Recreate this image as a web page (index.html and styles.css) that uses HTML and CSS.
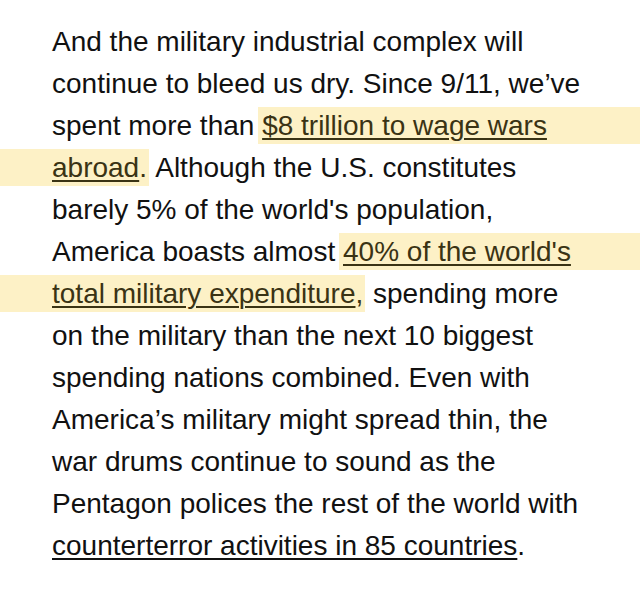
FILE: index.html
```html
<!DOCTYPE html>
<html lang="en">
<head>
<meta charset="utf-8">
<title>Article</title>
<link rel="stylesheet" href="styles.css">
</head>
<body>
<main class="page">
<p class="copy">And the military industrial complex will<br>continue to bleed us dry. Since 9/11, we’ve<br>spent more than <mark class="hl hl-open"><a href="#">$8 trillion to wage wars</a></mark><br><mark class="hl hl-close"><a href="#">abroad</a>.</mark> Although the U.S. constitutes<br>barely 5% of the world's population,<br>America boasts almost <mark class="hl hl-open"><a href="#">40% of the world's</a></mark><br><mark class="hl hl-close"><a href="#">total military expenditure</a>,</mark> spending more<br>on the military than the next 10 biggest<br>spending nations combined. Even with<br>America’s military might spread thin, the<br>war drums continue to sound as the<br>Pentagon polices the rest of the world with<br><a href="#" class="plain">counterterror activities in 85 countries</a>.</p>
</main>
</body>
</html>
```

FILE: styles.css
```css
html, body {
  margin: 0;
  padding: 0;
  background: #ffffff;
  overflow: hidden;
}
.page {
  padding: 21px 0 0 52px;
}
.copy {
  margin: 0;
  font-family: "Liberation Sans", Arial, sans-serif;
  font-size: 28px;
  line-height: 42px;
  color: #111111;
  white-space: nowrap;
}
.copy a {
  color: inherit;
  text-decoration: underline;
  text-decoration-thickness: 2px;
  text-underline-offset: 3px;
}
.hl {
  background: #fdf1c6;
  color: #3a3314;
  padding: 3px 0;
}
.hl-open {
  padding-left: 4px;
  margin-left: -4px;
  box-shadow: 100px 0 0 #fdf1c6, 200px 0 0 #fdf1c6;
}
.hl-close {
  padding-right: 2px;
  box-shadow: -60px 0 0 #fdf1c6;
}
.plain {
  color: #111111;
}
```
